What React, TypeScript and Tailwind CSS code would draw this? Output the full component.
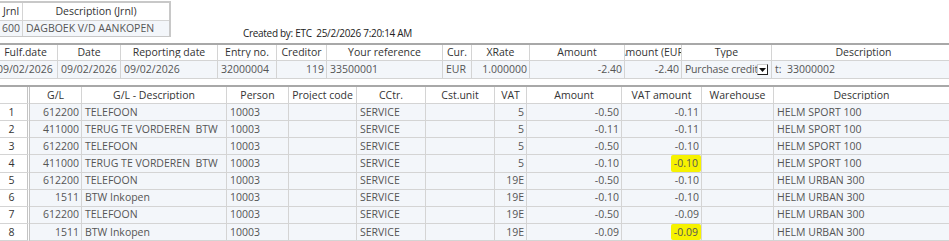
import React from "react";

const font = { fontFamily: '"Open Sans", "Noto Sans", sans-serif' };

type Col = { h: string; w: number };

const cols2: Col[] = [
  { h: "Fulf.date", w: 64 },
  { h: "Date", w: 63 },
  { h: "Reporting date", w: 97 },
  { h: "Entry no.", w: 59 },
  { h: "Creditor", w: 50 },
  { h: "Your reference", w: 116 },
  { h: "Cur.", w: 29 },
  { h: "XRate", w: 58 },
  { h: "Amount", w: 95 },
  { h: "Amount (EUR)", w: 57 },
  { h: "Type", w: 90 },
  { h: "Description", w: 183 },
];

const cols3: Col[] = [
  { h: "", w: 30 },
  { h: "G/L", w: 52 },
  { h: "G/L - Description", w: 145 },
  { h: "Person", w: 62 },
  { h: "Project code", w: 68 },
  { h: "CCtr.", w: 69 },
  { h: "Cst.unit", w: 69 },
  { h: "VAT", w: 32 },
  { h: "Amount", w: 95 },
  { h: "VAT amount", w: 80 },
  { h: "Warehouse", w: 72 },
  { h: "Description", w: 175 },
];

const rows = [
  ["1", "612200", "TELEFOON", "10003", "", "SERVICE", "", "5", "-0.50", "-0.11", "", "HELM SPORT 100"],
  ["2", "411000", "TERUG TE VORDEREN  BTW", "10003", "", "SERVICE", "", "5", "-0.11", "-0.11", "", "HELM SPORT 100"],
  ["3", "612200", "TELEFOON", "10003", "", "SERVICE", "", "5", "-0.50", "-0.10", "", "HELM SPORT 100"],
  ["4", "411000", "TERUG TE VORDEREN  BTW", "10003", "", "SERVICE", "", "5", "-0.10", "-0.10", "", "HELM SPORT 100"],
  ["5", "612200", "TELEFOON", "10003", "", "SERVICE", "", "19E", "-0.50", "-0.10", "", "HELM URBAN 300"],
  ["6", "1511", "BTW Inkopen", "10003", "", "SERVICE", "", "19E", "-0.10", "-0.10", "", "HELM URBAN 300"],
  ["7", "612200", "TELEFOON", "10003", "", "SERVICE", "", "19E", "-0.50", "-0.09", "", "HELM URBAN 300"],
  ["8", "1511", "BTW Inkopen", "10003", "", "SERVICE", "", "19E", "-0.09", "-0.09", "", "HELM URBAN 300"],
];

const rightCols3 = new Set([1, 7, 8, 9]);
const highlighted = new Set(["3-9", "7-9"]);

const cell2 = "h-[18px] p-0 border-r border-b border-[#d4d4d4] whitespace-nowrap overflow-hidden";

export default function App() {
  return (
    <div className="w-[949px] h-[241px] overflow-hidden bg-white text-[10.5px] leading-none" style={font}>
      {/* Top journal table + created by */}
      <div className="flex items-start h-[43px]">
        <div className="mt-[1px]">
          <table className="table-fixed w-[171px] border-separate border-spacing-0 border-t-2 border-r-2 border-b border-[#c8c8c8]">
            <colgroup>
              <col style={{ width: 23 }} />
              <col style={{ width: 146 }} />
            </colgroup>
            <thead>
              <tr>
                <th className="h-[18px] p-0 font-normal text-[#333] border-r border-b border-[#d4d4d4]">
                  <div className="flex justify-center overflow-hidden whitespace-nowrap">Jrnl</div>
                </th>
                <th className="h-[18px] p-0 font-normal text-[#333] border-b border-[#d4d4d4]">
                  <div className="flex justify-center overflow-hidden whitespace-nowrap">Description (Jrnl)</div>
                </th>
              </tr>
            </thead>
            <tbody>
              <tr className="bg-[#f3f6fa] text-[#555]">
                <td className="h-[15px] p-0 pr-[2px] text-right border-r border-[#d4d4d4]">600</td>
                <td className="h-[15px] p-0 pl-[3px] whitespace-nowrap">DAGBOEK V/D AANKOPEN</td>
              </tr>
            </tbody>
          </table>
        </div>
        <div className="ml-[72px] mt-[28px] text-[#222] whitespace-pre text-[10px] tracking-[-0.3px]">
          Created by: ETC  25/2/2026 7:20:14 AM
        </div>
      </div>

      {/* Header table */}
      <div className="ml-[-6px]">
        <table className="table-fixed w-[961px] border-separate border-spacing-0 border-t-2 border-[#a8a8a8]">
          <colgroup>
            {cols2.map((c, i) => (
              <col key={i} style={{ width: c.w }} />
            ))}
          </colgroup>
          <thead>
            <tr>
              {cols2.map((c, i) => (
                <th
                  key={i}
                  className={`h-[16px] p-0 font-normal text-[#333] bg-white border-b border-[#d4d4d4] ${
                    i === cols2.length - 1 ? "" : "border-r"
                  }`}
                >
                  <div className="flex justify-center overflow-hidden whitespace-nowrap">{c.h}</div>
                </th>
              ))}
            </tr>
          </thead>
          <tbody>
            <tr className="bg-[#f3f6fa] text-[#555]">
              <td className={`${cell2} pl-[3px]`}>09/02/2026</td>
              <td className={`${cell2} pl-[3px]`}>09/02/2026</td>
              <td className={`${cell2} pl-[3px]`}>09/02/2026</td>
              <td className={`${cell2} pl-[3px]`}>32000004</td>
              <td className={`${cell2} pr-[2px] text-right`}>119</td>
              <td className={`${cell2} pl-[3px]`}>33500001</td>
              <td className={`${cell2} pl-[3px]`}>EUR</td>
              <td className={`${cell2} pr-[2px] text-right`}>1.000000</td>
              <td className={`${cell2} pr-[2px] text-right`}>-2.40</td>
              <td className={`${cell2} pr-[2px] text-right`}>-2.40</td>
              <td className={`${cell2}`}>
                <div className="flex items-center h-[17px]">
                  <div className="flex-1 overflow-hidden whitespace-nowrap pl-[3px] tracking-[-0.2px]">Purchase credit note</div>
                  <div className="w-[11px] h-[11px] mr-[3px] flex items-center justify-center bg-white border border-t-[#ccc] border-l-[#ccc] border-r-[#222] border-b-[#222]">
                    <svg width="7" height="4" viewBox="0 0 7 4">
                      <path d="M0 0 H7 L3.5 4 Z" fill="#111" />
                    </svg>
                  </div>
                </div>
              </td>
              <td className="h-[18px] p-0 pl-[3px] border-b border-[#d4d4d4] whitespace-pre overflow-hidden">t:  33000002</td>
            </tr>
          </tbody>
        </table>
      </div>

      {/* Lines table */}
      <div className="mt-[6px]">
        <table className="table-fixed w-[949px] border-separate border-spacing-0 border-t-2 border-[#a8a8a8]">
          <colgroup>
            {cols3.map((c, i) => (
              <col key={i} style={{ width: c.w }} />
            ))}
          </colgroup>
          <thead>
            <tr>
              {cols3.map((c, i) => (
                <th
                  key={i}
                  className={`h-[17px] p-0 font-normal text-[#333] bg-white border-b border-[#d4d4d4] ${
                    i === 0 ? "border-r-[3px] border-r-[#c4c4c4] border-double" : i === cols3.length - 1 ? "" : "border-r"
                  }`}
                >
                  <div className="flex justify-center overflow-hidden whitespace-nowrap">{c.h}</div>
                </th>
              ))}
            </tr>
          </thead>
          <tbody>
            {rows.map((r, ri) => (
              <tr key={ri}>
                {r.map((v, ci) => {
                  if (ci === 0) {
                    return (
                      <td
                        key={ci}
                        className="h-[17px] p-0 pr-[4px] text-center text-[#333] bg-white border-b border-[#d4d4d4] border-r-[3px] border-r-[#c4c4c4] border-double"
                      >
                        {v}
                      </td>
                    );
                  }
                  const right = rightCols3.has(ci);
                  const hl = highlighted.has(`${ri}-${ci}`);
                  return (
                    <td
                      key={ci}
                      className={`h-[17px] p-0 bg-[#f3f6fa] text-[#555] border-b border-[#d4d4d4] whitespace-pre overflow-hidden ${
                        ci === r.length - 1 ? "" : "border-r"
                      } ${right ? "text-right pr-[2px]" : "pl-[3px]"}`}
                    >
                      {hl ? (
                        <span className="inline-block bg-[#f6f200] rounded-[2px] px-[3px] py-[3px] -mr-[2px]">{v}</span>
                      ) : (
                        v
                      )}
                    </td>
                  );
                })}
              </tr>
            ))}
          </tbody>
        </table>
      </div>
    </div>
  );
}
